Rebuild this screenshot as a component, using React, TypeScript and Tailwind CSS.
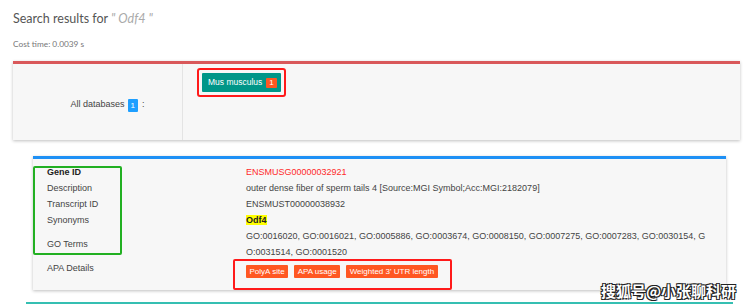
const goTerms =
    'GO:0016020, GO:0016021, GO:0005886, GO:0003674, GO:0008150, GO:0007275, GO:0007283, GO:0030154, GO:0031514, GO:0001520'

const Label = ({ children, bold }: { children: React.ReactNode; bold?: boolean }) => (
    <div className={`pl-[14px] flex items-center ${bold ? 'font-bold text-[#222]' : 'text-[#444]'}`}>{children}</div>
)

const OrangeBtn = ({ text }: { text: string }) => (
    <span className="bg-[#ff5722] text-white text-[8px] leading-[13px] h-[13px] px-[3.5px] rounded-[1px]">{text}</span>
)

export default function App() {
    return (
        <div className="relative w-[753px] h-[308px] bg-white overflow-hidden font-['Liberation_Sans',Arial,sans-serif]">

            <div className="pl-[13px] pt-[9px]">
                <h2 className="font-['Lato',sans-serif] text-[12.5px] leading-[20px] text-[#555]">
                    Search results for <i className="text-[#aaa]">" Odf4 "</i>
                </h2>
                <p className="font-['Lato',sans-serif] text-[8.3px] leading-[12px] mt-[9px] text-[#777]">Cost time: 0.0039 s</p>
            </div>

            {/* databases card */}
            <div className="mx-[13px] mt-[11px] h-[79px] border-t-[3px] border-[#d9585a] bg-[#f7f7f7] shadow-[0_1px_3px_rgba(0,0,0,0.25)] flex">
                <div className="w-[170px] border-r border-[#e4e4e4] flex items-center justify-center pl-[20px] pt-[6px] text-[9px] text-[#444]">
                    All databases
                    <span className="ml-[3px] bg-[#1e9fff] text-white text-[8px] leading-[13px] h-[13px] px-[3px] rounded-[1px]">1</span>
                    <span className="ml-[4px]">:</span>
                </div>
                <div className="pl-[14px] pt-[4px]">
                    <div className="border-2 border-[#ff1a1a] rounded-[3px] p-[3px]">
                        <div className="bg-[#009688] text-white text-[8.5px] h-[19px] pl-[6px] pr-[4px] flex items-center gap-[4px] rounded-[1px]">
                            Mus musculus
                            <span className="bg-[#ff5722] text-[8px] leading-[10px] h-[10px] px-[3px] rounded-[1px]">1</span>
                        </div>
                    </div>
                </div>
            </div>

            {/* gene card */}
            <div className="relative ml-[33px] w-[693px] mt-[16px] h-[134px] border-t-[3px] border-[#1e90f5] bg-[#f7f7f7] shadow-[0_1px_3px_rgba(0,0,0,0.25)] pt-[5px] text-[9px]">
                <div className="grid grid-cols-[213px_462px] auto-rows-[16px] leading-[16px]">
                    <Label bold>Gene ID</Label>
                    <div className="text-[#ff2a2a]">ENSMUSG00000032921</div>
                    <Label>Description</Label>
                    <div className="text-[#444]">outer dense fiber of sperm tails 4 [Source:MGI Symbol;Acc:MGI:2182079]</div>
                    <Label>Transcript ID</Label>
                    <div className="text-[#444]">ENSMUST00000038932</div>
                    <Label>Synonyms</Label>
                    <div><span className="bg-[#ffff00] font-bold text-[#222]">Odf4</span></div>
                    <div className="row-span-2"><Label><span className="h-[32px] flex items-center">GO Terms</span></Label></div>
                    <div className="row-span-2 text-[#444] break-all">{goTerms}</div>
                    <Label>APA Details</Label>
                    <div className="flex items-center gap-[6px] h-[18px] mt-[2px]">
                        <OrangeBtn text="PolyA site" />
                        <OrangeBtn text="APA usage" />
                        <OrangeBtn text="Weighted 3' UTR length" />
                    </div>
                </div>

                {/* annotation boxes */}
                <div className="absolute left-0 top-[7px] w-[89px] h-[89px] border-2 border-[#22b022] rounded-[2px]"></div>
                <div className="absolute left-[200px] top-[100px] w-[219px] h-[31px] border-2 border-[#ff1a1a] rounded-[2px]"></div>
            </div>

            <div className="ml-[26px] w-[707px] mt-[12px] h-[2px] bg-[#35bfb2]"></div>

            <div className="absolute left-[601px] top-[281px] text-white font-bold text-[15px] leading-[20px] font-['Noto_Sans_CJK_SC',sans-serif] [text-shadow:-1px_-1px_0_#222,1px_-1px_0_#222,-1px_1px_0_#222,1px_1px_0_#222]">
                搜狐号@小张聊科研
            </div>
        </div>
    )
}
